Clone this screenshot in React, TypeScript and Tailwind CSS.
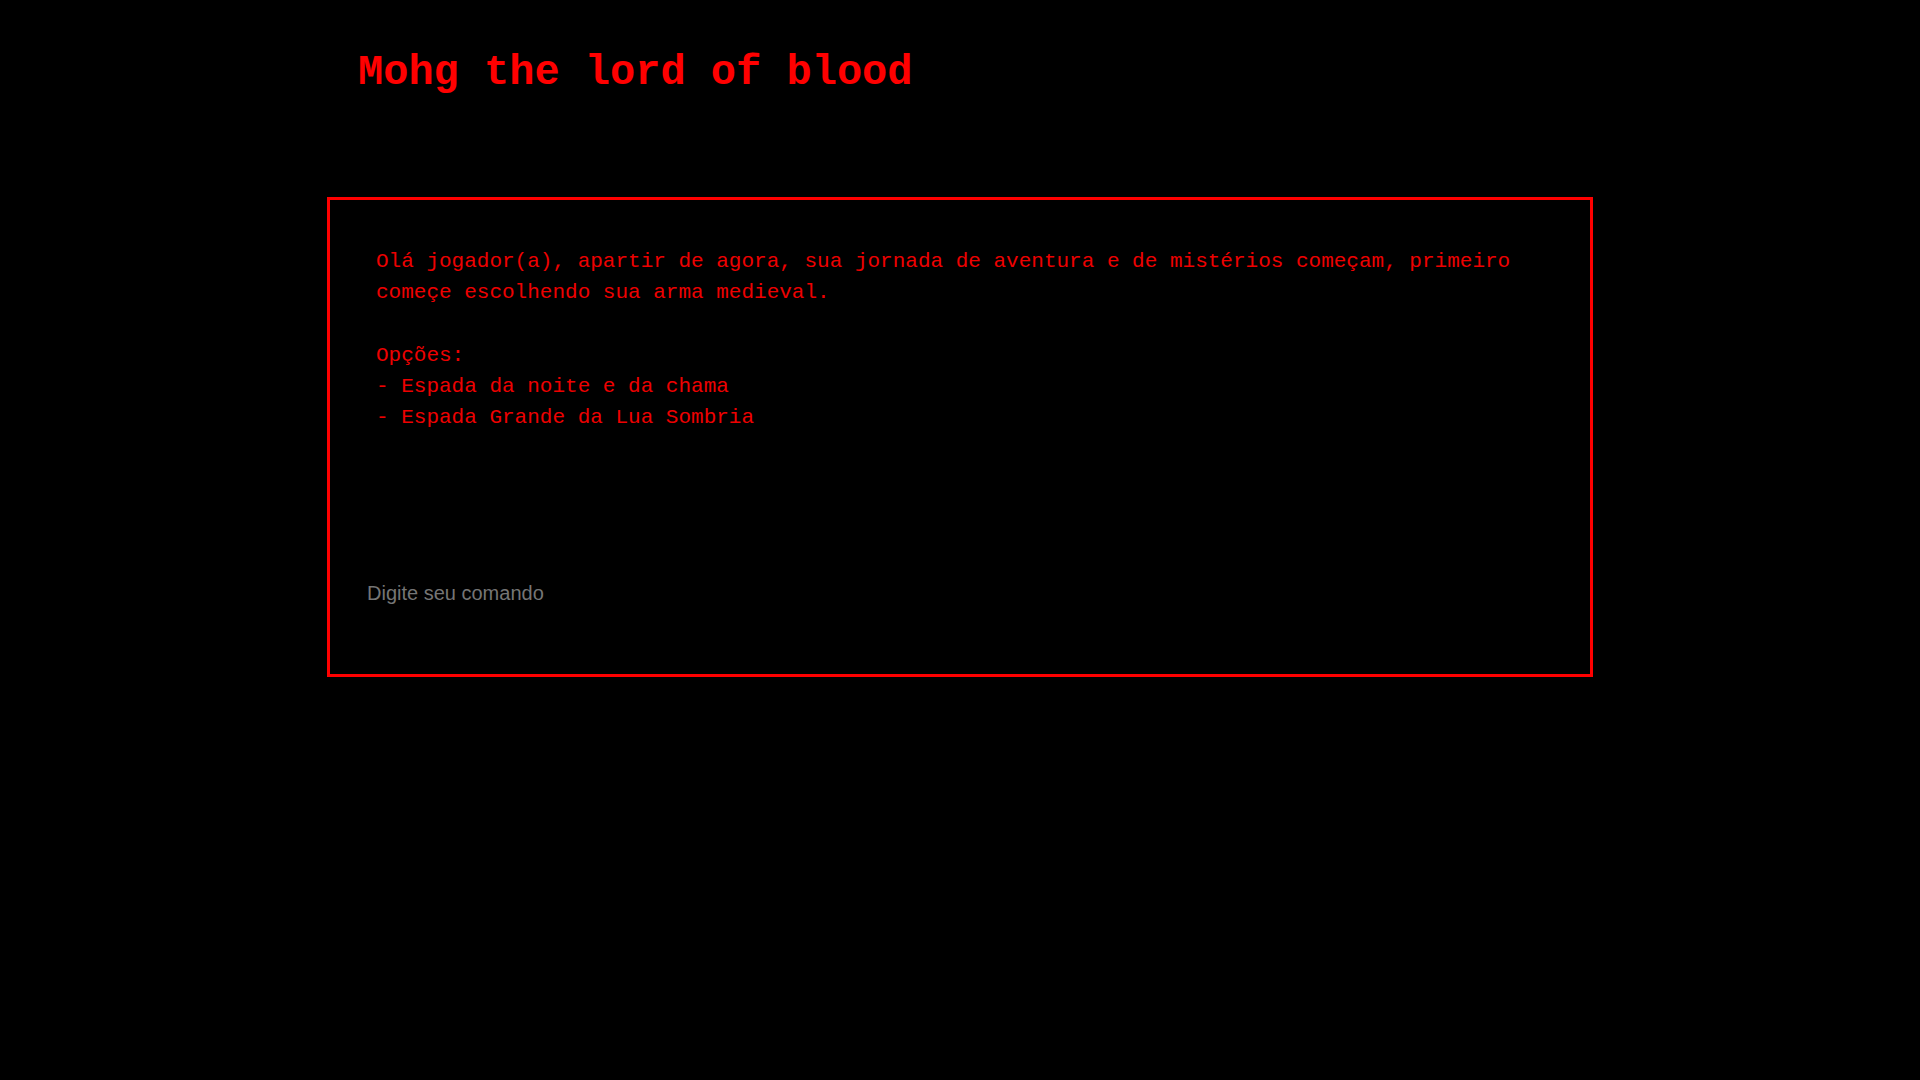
import { useState } from 'react';

export default function App() {
  const [command, setCommand] = useState('');

  return (
    <div className="min-h-screen bg-black">
      <div className="max-w-[1266px] mx-auto pt-[52px]">
        <h1 className="pl-[31px] font-['Liberation_Mono',monospace] font-bold text-[42px] leading-none text-[#ff0000]">
          Mohg the lord of blood
        </h1>

        <div className="mt-[103px] border-[3px] border-[#ff0000] px-[46px] pt-[46px] pb-[70px]">
          <div className="font-['Liberation_Mono',monospace] text-[21px] leading-[31.2px] text-[#ee0000] whitespace-pre-wrap">
            {'Olá jogador(a), apartir de agora, sua jornada de aventura e de mistérios começam, primeiro começe escolhendo sua arma medieval.\n\nOpções:\n- Espada da noite e da chama\n- Espada Grande da Lua Sombria'}
          </div>

          <input
            type="text"
            value={command}
            onChange={(e) => setCommand(e.target.value)}
            placeholder="Digite seu comando"
            className="mt-[148px] -ml-[9px] block w-[600px] h-[23px] bg-transparent border-0 outline-none p-0 font-['Liberation_Sans',Arial,sans-serif] text-[20px] text-[#dddddd] placeholder:text-[#757575]"
          />
        </div>
      </div>
    </div>
  );
}
